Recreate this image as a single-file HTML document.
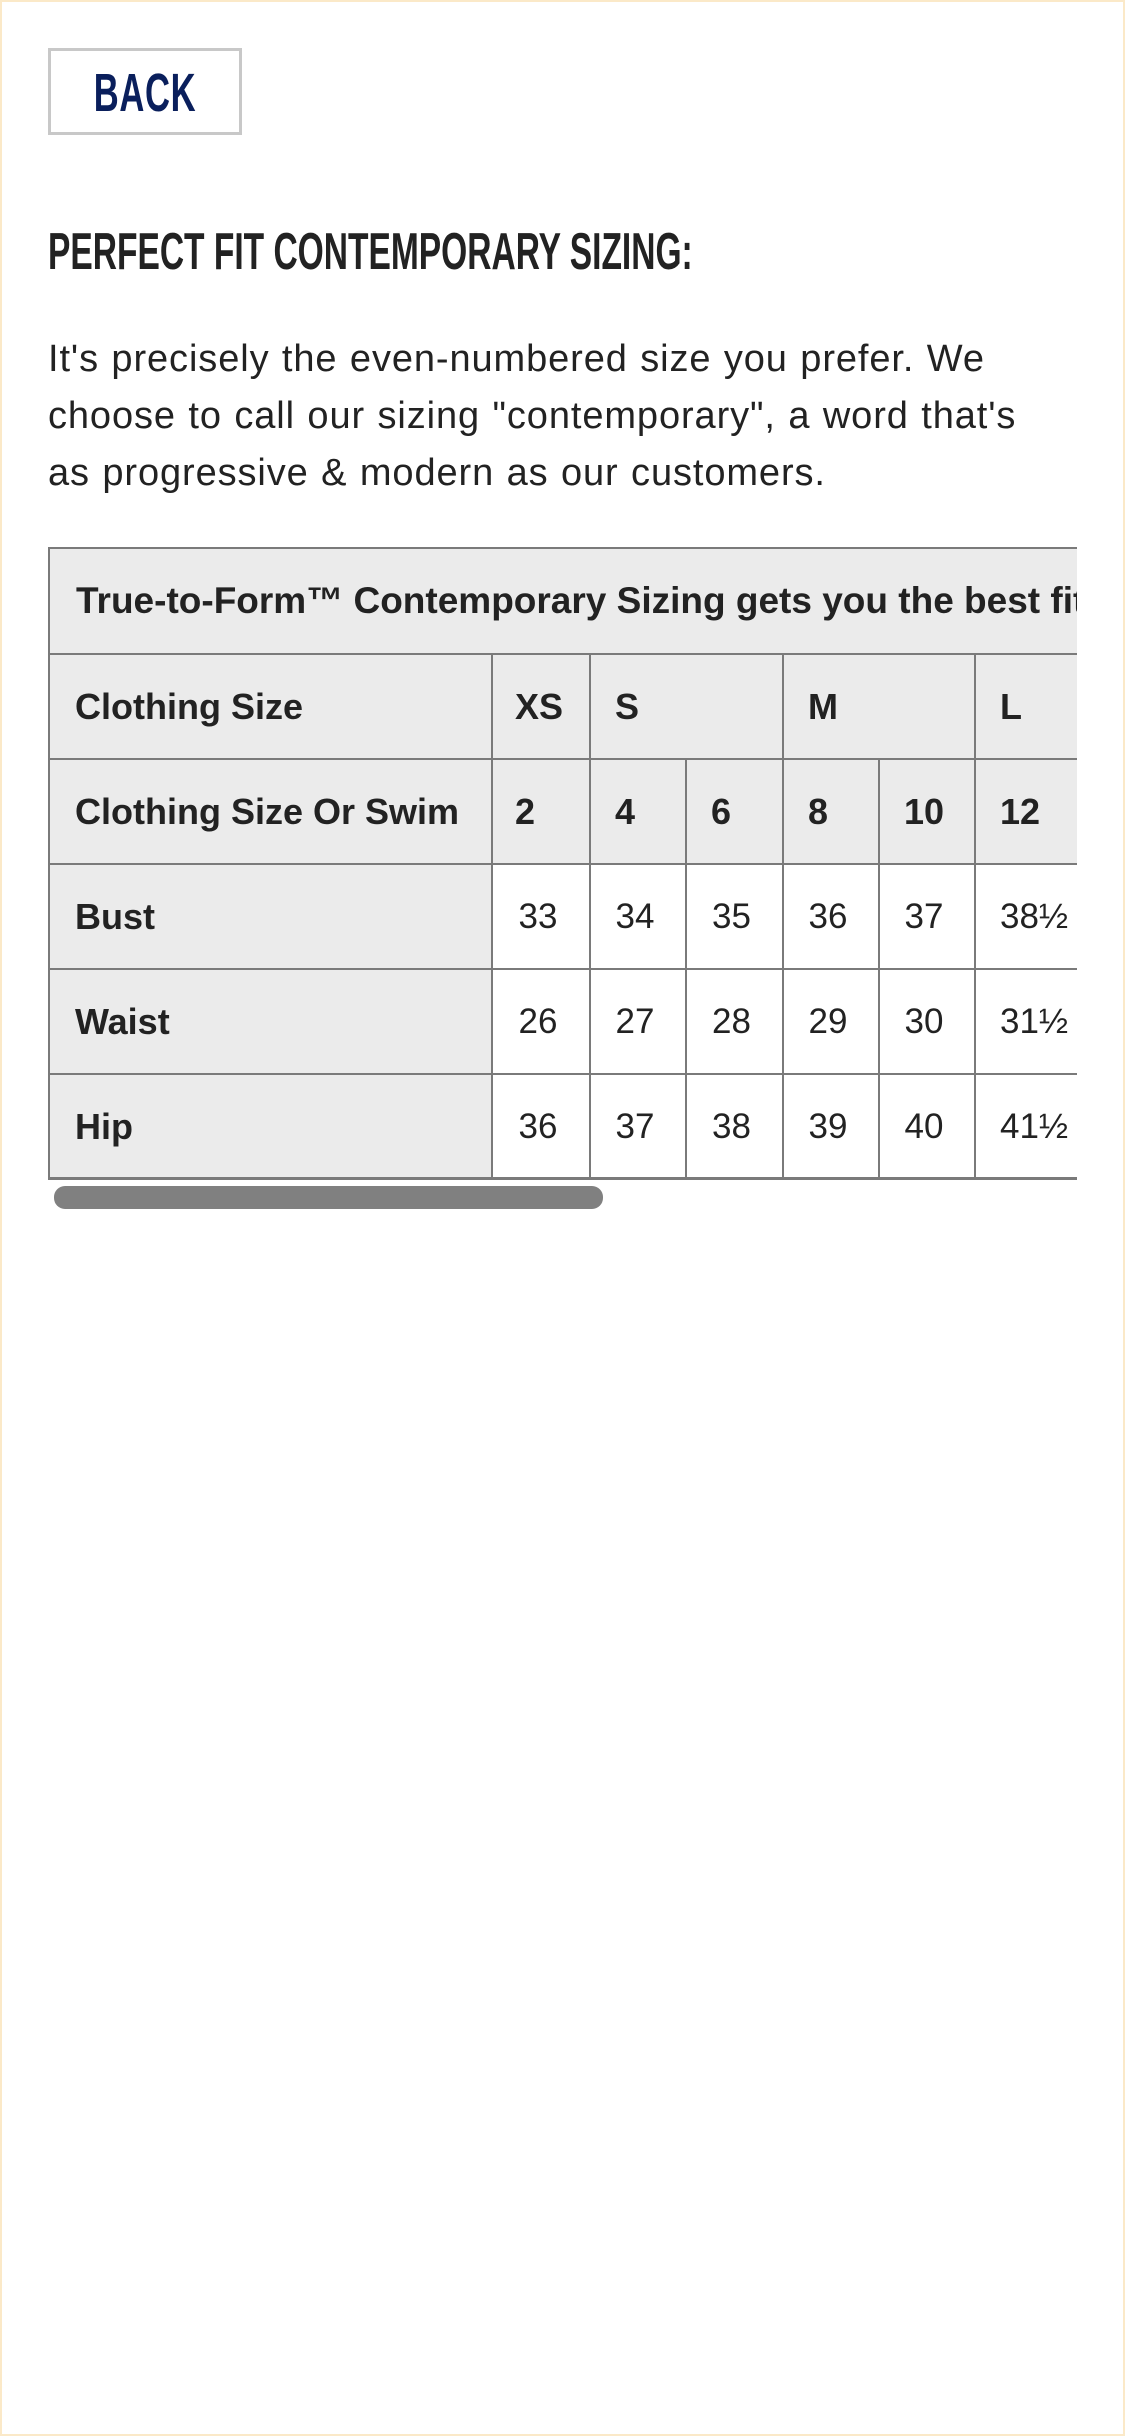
<!DOCTYPE html>
<html><head><meta charset="utf-8"><style>
html,body{margin:0;padding:0}
body{width:1125px;height:2436px;position:relative;background:#fff;overflow:hidden;font-family:"Liberation Sans",sans-serif;color:#222}
.frame{position:absolute;left:0;top:0;width:1121px;height:2432px;border:2px solid #fbe9c8}
.back{position:absolute;left:48px;top:48px;width:188px;height:81px;border:3px solid #c8c8c8;}
.back span{position:absolute;left:0;right:0;top:11px;text-align:center;font-weight:bold;font-size:54px;color:#0a1f5c;transform:scaleX(.64);letter-spacing:1px}
h1{position:absolute;left:48px;top:222px;margin:0;font-size:52px;font-weight:bold;white-space:nowrap;transform:scaleX(.645);transform-origin:0 0;color:#222}
p{position:absolute;left:48px;top:331px;margin:0;font-size:38px;line-height:57px;width:1100px;transform:scaleX(1.0);transform-origin:0 0;color:#222;letter-spacing:0.9px;word-spacing:1px}
.tbl{position:absolute;left:48px;top:547px;width:1029px;height:633px;overflow:hidden}
.c{position:absolute;box-sizing:border-box;border-left:2px solid #7a7a7a;border-top:2px solid #7a7a7a;background:#ebebeb;font-size:35px;display:flex;align-items:center;white-space:nowrap}
.b{font-weight:bold;font-size:36px}
.w{background:#fff;justify-content:center;padding-right:6px}
.l{padding-left:25px}
.bot{position:absolute;left:0;top:630px;width:1029px;height:3px;background:#7a7a7a}
.sb{position:absolute;left:54px;top:1186px;width:549px;height:23px;border-radius:11px;background:#808080}
</style></head><body>
<div class="frame"></div>
<div class="back"><span>BACK</span></div>
<h1>PERFECT FIT CONTEMPORARY SIZING:</h1>
<p>It's precisely the even-numbered size you prefer. We<br>choose to call our sizing "contemporary", a word that's<br>as progressive &amp; modern as our customers.</p>
<div class="tbl">
<div class="c b l" style="left:0;top:0;width:1200px;height:106px;font-size:37px;padding-left:26px">True-to-Form™ Contemporary Sizing gets you the best fit.</div>
<div class="c b l" style="left:0;top:106px;width:443px;height:105px">Clothing Size</div>
<div class="c b l" style="left:443px;top:106px;width:98px;height:105px;padding-left:22px">XS</div>
<div class="c b l" style="left:541px;top:106px;width:193px;height:105px;padding-left:24px">S</div>
<div class="c b l" style="left:734px;top:106px;width:192px;height:105px;padding-left:24px">M</div>
<div class="c b l" style="left:926px;top:106px;width:200px;height:105px;padding-left:24px">L</div>
<div class="c b l" style="left:0;top:211px;width:443px;height:105px">Clothing Size Or Swim</div>
<div class="c b l" style="left:443px;top:211px;width:98px;height:105px;padding-left:22px">2</div>
<div class="c b l" style="left:541px;top:211px;width:96px;height:105px;padding-left:24px">4</div>
<div class="c b l" style="left:637px;top:211px;width:97px;height:105px;padding-left:24px">6</div>
<div class="c b l" style="left:734px;top:211px;width:96px;height:105px;padding-left:24px">8</div>
<div class="c b l" style="left:830px;top:211px;width:96px;height:105px;padding-left:24px">10</div>
<div class="c b l" style="left:926px;top:211px;width:200px;height:105px;padding-left:24px">12</div>

<div class="c b l" style="left:0;top:316px;width:443px;height:105px">Bust</div>
<div class="c w" style="left:443px;top:316px;width:98px;height:105px">33</div>
<div class="c w" style="left:541px;top:316px;width:96px;height:105px">34</div>
<div class="c w" style="left:637px;top:316px;width:97px;height:105px">35</div>
<div class="c w" style="left:734px;top:316px;width:96px;height:105px">36</div>
<div class="c w" style="left:830px;top:316px;width:96px;height:105px">37</div>
<div class="c w l" style="left:926px;top:316px;width:200px;height:105px;justify-content:flex-start;padding-left:24px">38½</div>

<div class="c b l" style="left:0;top:421px;width:443px;height:105px">Waist</div>
<div class="c w" style="left:443px;top:421px;width:98px;height:105px">26</div>
<div class="c w" style="left:541px;top:421px;width:96px;height:105px">27</div>
<div class="c w" style="left:637px;top:421px;width:97px;height:105px">28</div>
<div class="c w" style="left:734px;top:421px;width:96px;height:105px">29</div>
<div class="c w" style="left:830px;top:421px;width:96px;height:105px">30</div>
<div class="c w l" style="left:926px;top:421px;width:200px;height:105px;justify-content:flex-start;padding-left:24px">31½</div>

<div class="c b l" style="left:0;top:526px;width:443px;height:105px">Hip</div>
<div class="c w" style="left:443px;top:526px;width:98px;height:105px">36</div>
<div class="c w" style="left:541px;top:526px;width:96px;height:105px">37</div>
<div class="c w" style="left:637px;top:526px;width:97px;height:105px">38</div>
<div class="c w" style="left:734px;top:526px;width:96px;height:105px">39</div>
<div class="c w" style="left:830px;top:526px;width:96px;height:105px">40</div>
<div class="c w l" style="left:926px;top:526px;width:200px;height:105px;justify-content:flex-start;padding-left:24px">41½</div>
<div class="bot"></div>
</div>
<div class="sb"></div>
</body></html>
